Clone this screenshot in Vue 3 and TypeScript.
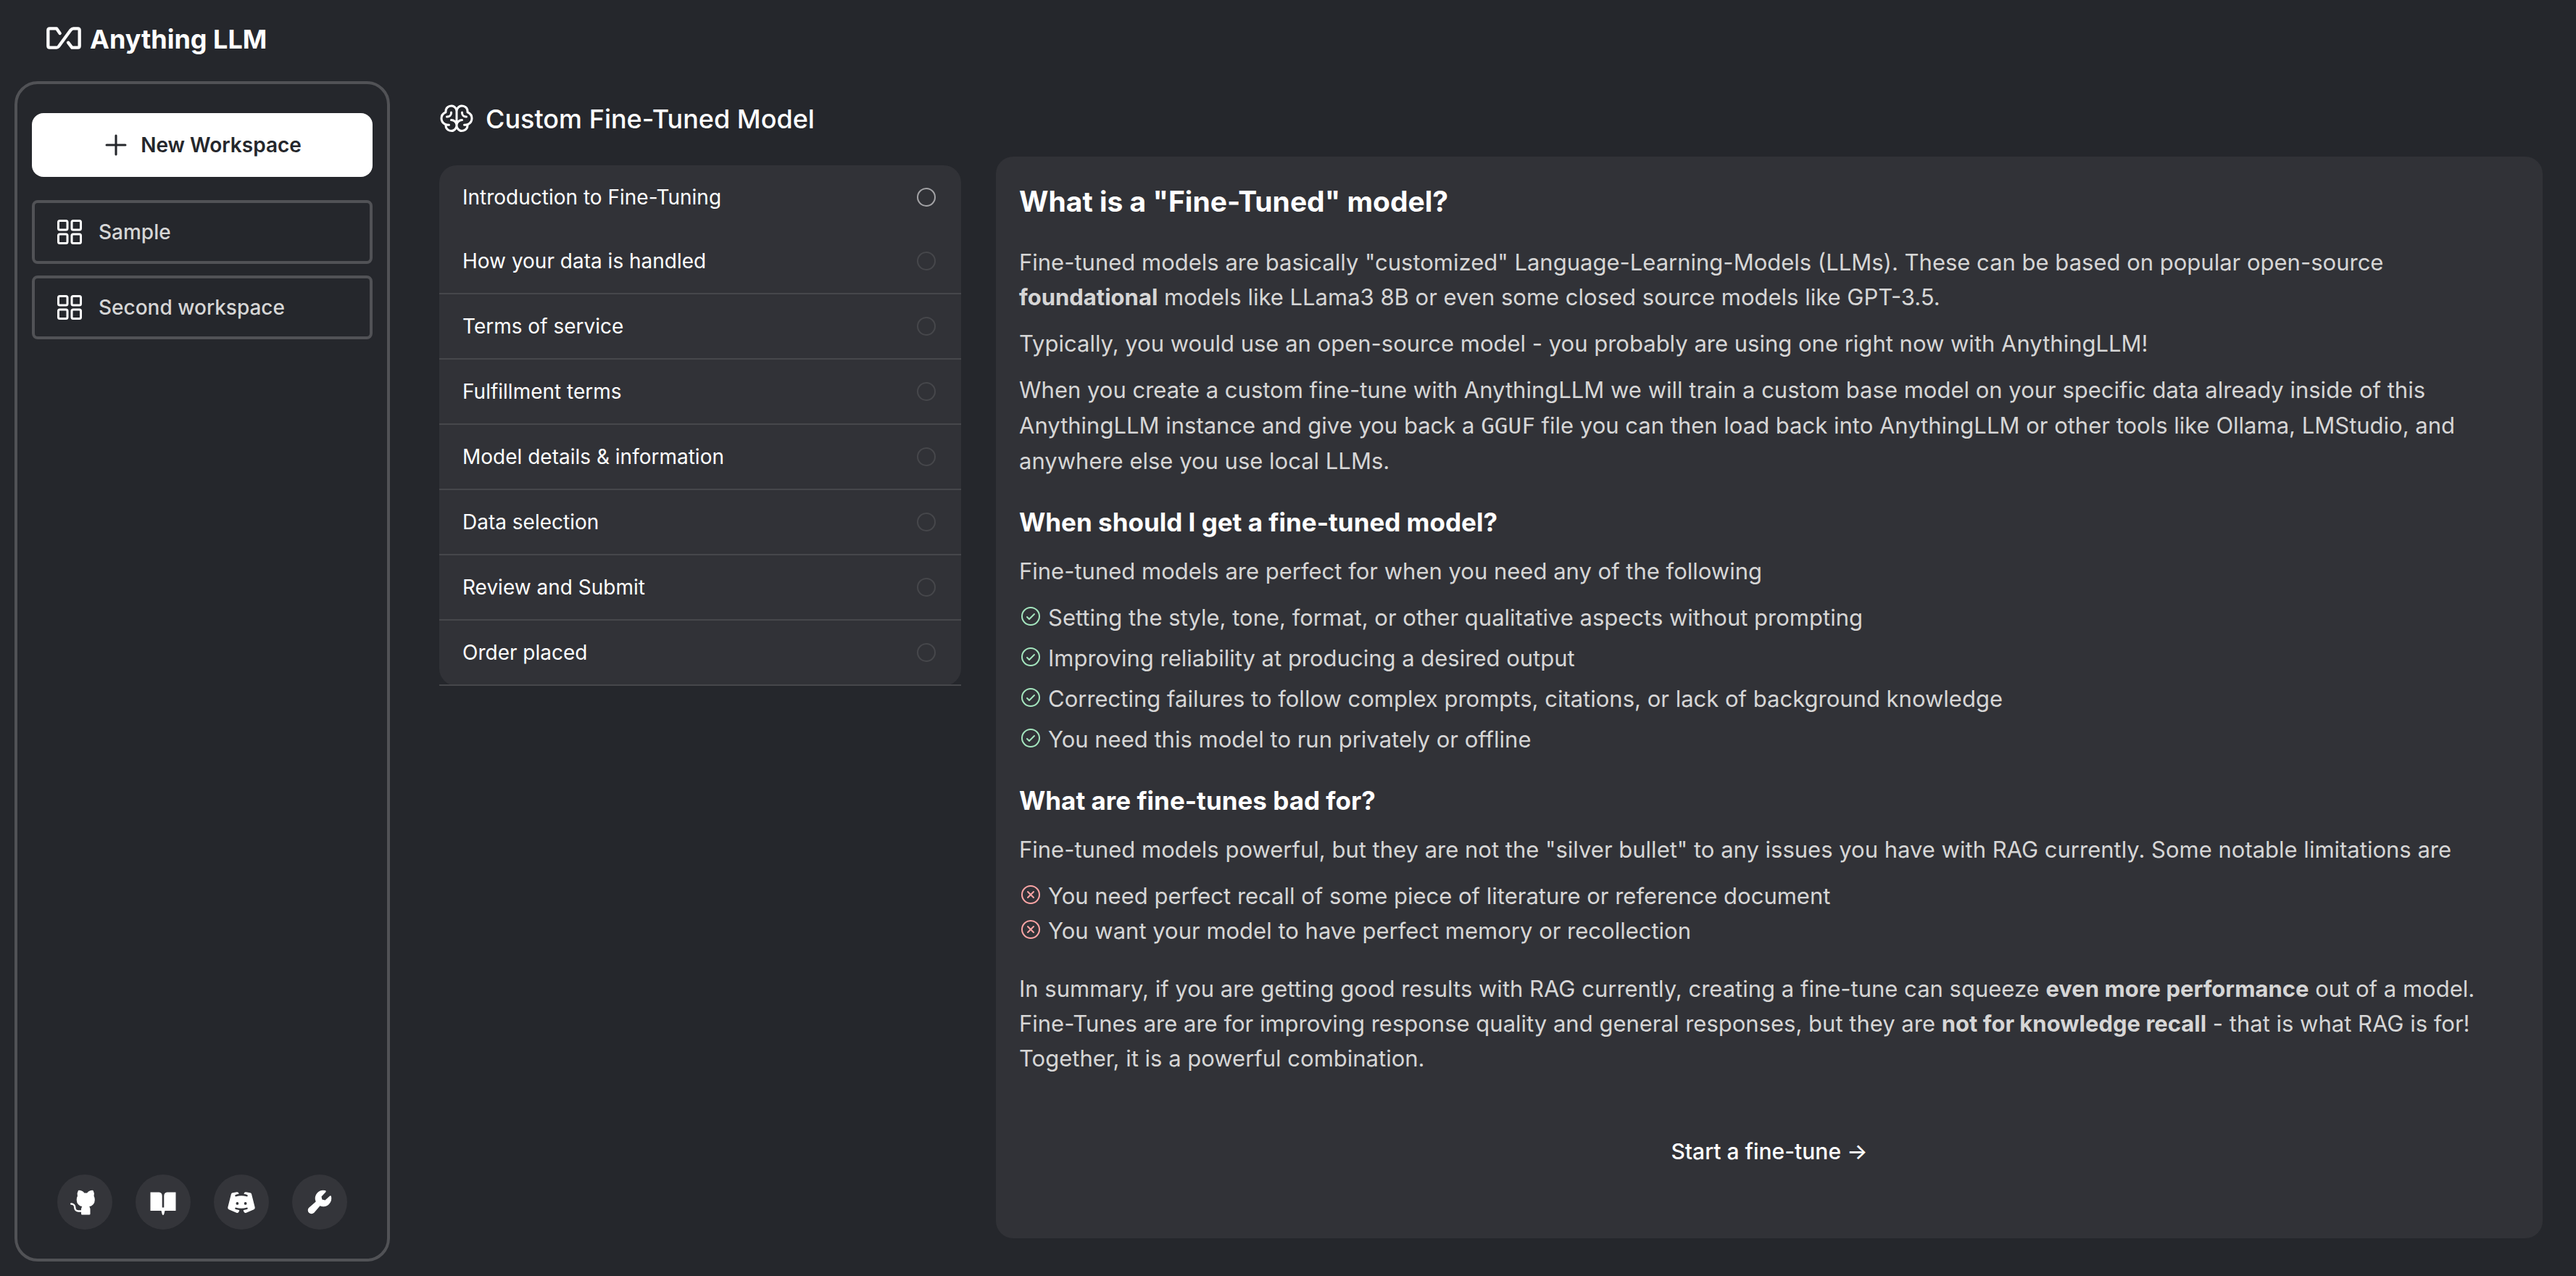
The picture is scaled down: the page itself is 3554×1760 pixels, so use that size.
<script setup lang="ts">
interface Step {
  label: string
  active: boolean
}

const workspaces: string[] = ['Sample', 'Second workspace']

const steps: Step[] = [
  { label: 'Introduction to Fine-Tuning', active: true },
  { label: 'How your data is handled', active: false },
  { label: 'Terms of service', active: false },
  { label: 'Fulfillment terms', active: false },
  { label: 'Model details & information', active: false },
  { label: 'Data selection', active: false },
  { label: 'Review and Submit', active: false },
  { label: 'Order placed', active: false },
]

const goodFor: string[] = [
  'Setting the style, tone, format, or other qualitative aspects without prompting',
  'Improving reliability at producing a desired output',
  'Correcting failures to follow complex prompts, citations, or lack of background knowledge',
  'You need this model to run privately or offline',
]

const badFor: string[] = [
  'You need perfect recall of some piece of literature or reference document',
  'You want your model to have perfect memory or recollection',
]
</script>

<template>
  <div class="app">
    <div class="side">
      <header class="brand">
        <svg class="brand-mark" viewBox="0 0 144 93" aria-hidden="true">
          <path
            d="M56 27 42 7H14Q7 7 7 14V79Q7 86 14 86H42Q47 86 51 81L101 13Q106 7 112 7H130Q137 7 137 14V79Q137 86 130 86H106L90 65"
          />
        </svg>
        <span>Anything LLM</span>
      </header>

      <aside class="sidebar">
        <button type="button" class="new-workspace">
          <svg class="icon-plus" viewBox="0 0 256 256" aria-hidden="true">
            <path d="M36 128H220M128 36V220" />
          </svg>
          <span>New Workspace</span>
        </button>

        <nav class="workspaces">
          <a v-for="name in workspaces" :key="name" href="#" class="workspace">
            <svg class="icon-grid" viewBox="0 0 40 40" aria-hidden="true">
              <rect x="4.5" y="4.5" width="12.5" height="12.5" rx="2" />
              <rect x="23" y="4.5" width="12.5" height="12.5" rx="2" />
              <rect x="4.5" y="23" width="12.5" height="12.5" rx="2" />
              <rect x="23" y="23" width="12.5" height="12.5" rx="2" />
            </svg>
            <span>{{ name }}</span>
          </a>
        </nav>

        <footer class="links">
          <a href="#" class="round" aria-label="GitHub">
            <svg viewBox="0 0 256 256">
              <path
                d="M216,104v8a56.06,56.06,0,0,1-48.44,55.47A39.8,39.8,0,0,1,176,192v40a8,8,0,0,1-8,8H104a8,8,0,0,1-8-8V216H72a40,40,0,0,1-40-40A24,24,0,0,0,8,152a8,8,0,0,1,0-16,40,40,0,0,1,40,40,24,24,0,0,0,24,24H96v-8a39.8,39.8,0,0,1,8.44-24.53A56.06,56.06,0,0,1,56,112v-8a58.14,58.14,0,0,1,7.69-28.32A59.78,59.78,0,0,1,69.07,28,8,8,0,0,1,76,24a59.75,59.75,0,0,1,48,24h24a59.75,59.75,0,0,1,48-24,8,8,0,0,1,6.93,4,59.74,59.74,0,0,1,5.37,47.68A58,58,0,0,1,216,104Z"
              />
            </svg>
          </a>
          <a href="#" class="round" aria-label="Documentation">
            <svg viewBox="0 0 40 40">
              <path
                d="M2.5 6.5H14.5Q18.7 7 18.7 11.5V27.5H21.3V11.5Q21.3 7 25.5 6.5H37.5V32H22.5L21.2 37Q20 39 18.8 37L17.5 32H2.5Z"
              />
            </svg>
          </a>
          <a href="#" class="round" aria-label="Discord">
            <svg viewBox="0 0 256 256">
              <path
                d="M247.51,174.39,218,58a16.08,16.08,0,0,0-13-11.88l-36.06-5.92a16.22,16.22,0,0,0-18.26,11.88l-.21.85a4,4,0,0,0,3.27,4.93,155.62,155.62,0,0,1,24.41,5.62,8.2,8.2,0,0,1,5.62,9.7,8,8,0,0,1-10.19,5.64,155.4,155.4,0,0,0-90.8-.1,8.22,8.22,0,0,1-10.28-4.81,8,8,0,0,1,5.08-10.33,156.85,156.85,0,0,1,24.72-5.72,4,4,0,0,0,3.27-4.93l-.21-.85A16.21,16.21,0,0,0,87.08,40.21L51,46.13A16.08,16.08,0,0,0,38,58L8.49,174.39a15.94,15.94,0,0,0,9.06,18.51l67,29.71a16.17,16.17,0,0,0,21.71-9.1l3.49-9.45a4,4,0,0,0-3.27-5.35,158.13,158.13,0,0,1-28.63-6.2,8.2,8.2,0,0,1-5.61-9.67,8,8,0,0,1,10.2-5.66,155.59,155.59,0,0,0,91.12,0,8,8,0,0,1,10.19,5.65,8.19,8.19,0,0,1-5.61,9.68,157.84,157.84,0,0,1-28.62,6.2,4,4,0,0,0-3.27,5.35l3.49,9.45a16.18,16.18,0,0,0,21.71,9.1l67-29.71A15.94,15.94,0,0,0,247.51,174.39ZM92,152a12,12,0,1,1,12-12A12,12,0,0,1,92,152Zm72,0a12,12,0,1,1,12-12A12,12,0,0,1,164,152Z"
              />
            </svg>
          </a>
          <a href="#" class="round" aria-label="Settings">
            <svg viewBox="0 0 256 256">
              <path
                d="M232,96a72,72,0,0,1-100.94,66L79,222.22c-.12.14-.26.29-.39.42a32,32,0,0,1-45.26-45.26c.14-.13.28-.27.43-.39L94,124.94a72.07,72.07,0,0,1,83.54-98.78,8,8,0,0,1,3.93,13.19L144,80l5.66,26.35L176,112l40.65-37.52a8,8,0,0,1,13.19,3.93A72.6,72.6,0,0,1,232,96Z"
              />
            </svg>
          </a>
        </footer>
      </aside>
    </div>

    <main class="main">
      <section class="progress">
        <h1 class="page-title">
          <svg class="icon-brain" viewBox="0 0 256 256" aria-hidden="true">
            <path
              d="M248,124a56.11,56.11,0,0,0-32-50.61V72a48,48,0,0,0-88-26.49A48,48,0,0,0,40,72v1.39a56,56,0,0,0,0,101.2V176a48,48,0,0,0,88,26.49A48,48,0,0,0,216,176v-1.41A56.09,56.09,0,0,0,248,124ZM88,208a32,32,0,0,1-31.81-28.56A55.87,55.87,0,0,0,64,180h8a8,8,0,0,0,0-16H64A40,40,0,0,1,50.67,86.27,8,8,0,0,0,56,78.73V72a32,32,0,0,1,64,0v68.26A47.8,47.8,0,0,0,88,128a8,8,0,0,0,0,16,32,32,0,0,1,0,64Zm104-44h-8a8,8,0,0,0,0,16h8a55.87,55.87,0,0,0,7.81-.56A32,32,0,1,1,168,144a8,8,0,0,0,0-16,47.8,47.8,0,0,0-32,12.26V72a32,32,0,0,1,64,0v6.73a8,8,0,0,0,5.33,7.54A40,40,0,0,1,192,164Zm16-52a8,8,0,0,1-8,8h-4a36,36,0,0,1-36-36V80a8,8,0,0,1,16,0v4a20,20,0,0,0,20,20h4A8,8,0,0,1,208,112ZM60,120H56a8,8,0,0,1,0-16h4A20,20,0,0,0,80,84V80a8,8,0,0,1,16,0v4A36,36,0,0,1,60,120Z"
            />
          </svg>
          <span>Custom Fine-Tuned Model</span>
        </h1>
        <ol class="steps">
          <li v-for="step in steps" :key="step.label" class="step" :class="{ active: step.active }">
            <span>{{ step.label }}</span>
            <span class="dot"></span>
          </li>
        </ol>
      </section>

      <article class="panel">
        <h2 class="panel-title">What is a "Fine-Tuned" model?</h2>
        <p>
          Fine-tuned models are basically "customized" Language-Learning-Models (LLMs). These can be based on popular
          open-source <strong>foundational</strong> models like LLama3 8B or even some closed source models like
          GPT-3.5.
        </p>
        <p>Typically, you would use an open-source model - you probably are using one right now with AnythingLLM!</p>
        <p>
          When you create a custom fine-tune with AnythingLLM we will train a custom base model on your specific data
          already inside of this AnythingLLM instance and give you back a <code>GGUF</code> file you can then load back
          into AnythingLLM or other tools like Ollama, LMStudio, and anywhere else you use local LLMs.
        </p>

        <h3>When should I get a fine-tuned model?</h3>
        <p>Fine-tuned models are perfect for when you need any of the following</p>
        <ul class="points good">
          <li v-for="text in goodFor" :key="text">
            <svg viewBox="0 0 256 256" aria-hidden="true">
              <circle cx="128" cy="128" r="96" />
              <path d="M88 136 112 160 168 104" />
            </svg>
            <span>{{ text }}</span>
          </li>
        </ul>

        <h3>What are fine-tunes bad for?</h3>
        <p>
          Fine-tuned models powerful, but they are not the "silver bullet" to any issues you have with RAG currently.
          Some notable limitations are
        </p>
        <ul class="points bad">
          <li v-for="text in badFor" :key="text">
            <svg viewBox="0 0 256 256" aria-hidden="true">
              <circle cx="128" cy="128" r="96" />
              <path d="M160 96 96 160M96 96 160 160" />
            </svg>
            <span>{{ text }}</span>
          </li>
        </ul>

        <p class="summary">
          In summary, if you are getting good results with RAG currently, creating a fine-tune can squeeze
          <strong>even more performance</strong> out of a model. Fine-Tunes are are for improving response quality and
          general responses, but they are <strong>not for knowledge recall</strong> - that is what RAG is for! Together,
          it is a powerful combination.
        </p>

        <button type="button" class="start">Start a fine-tune →</button>
      </article>
    </main>
  </div>
</template>

<style>
body {
  background: #25272c;
}
</style>

<style scoped>
.app {
  box-sizing: border-box;
  display: flex;
  min-height: 100vh;
  padding: 0 46px 20px 20px;
  background: #25272c;
  color: #fff;
  font-family: Inter, 'Open Sans', sans-serif;
}

.side {
  flex: 0 0 518px;
  display: flex;
  flex-direction: column;
}

.brand {
  display: flex;
  align-items: center;
  gap: 12px;
  height: 108px;
  margin-bottom: 4px;
  padding-left: 44px;
  font-size: 36px;
  font-weight: 700;
}

.brand-mark {
  width: 48px;
  height: 31px;
  margin-bottom: 4px;
  fill: none;
  stroke: #fff;
  stroke-width: 13;
  stroke-linecap: round;
  stroke-linejoin: round;
}

.sidebar {
  flex: 1;
  display: flex;
  flex-direction: column;
  padding: 40px 20px;
  border: 4px solid #515256;
  border-radius: 32px;
}

.new-workspace {
  display: flex;
  align-items: center;
  justify-content: center;
  gap: 16px;
  height: 88px;
  padding: 0;
  border: 0;
  border-radius: 16px;
  background: #fff;
  color: #25272c;
  font-family: inherit;
  font-size: 28px;
  font-weight: 600;
}

.icon-plus {
  width: 36px;
  height: 36px;
  fill: none;
  stroke: currentColor;
  stroke-width: 22;
  stroke-linecap: round;
}

.workspaces {
  display: flex;
  flex-direction: column;
  gap: 16px;
  margin-top: 32px;
}

.workspace {
  box-sizing: border-box;
  display: flex;
  align-items: center;
  gap: 20px;
  height: 88px;
  padding: 0 28px;
  border: 4px solid #515256;
  border-radius: 8px;
  color: #d6d6d6;
  font-size: 28px;
  font-weight: 500;
  text-decoration: none;
}

.icon-grid {
  width: 40px;
  height: 40px;
  fill: none;
  stroke: #fff;
  stroke-width: 3;
}

.links {
  display: flex;
  justify-content: center;
  gap: 32px;
  margin-top: auto;
}

.round {
  display: flex;
  align-items: center;
  justify-content: center;
  width: 76px;
  height: 76px;
  border-radius: 50%;
  background: #34353a;
}

.round svg {
  width: 40px;
  height: 40px;
  fill: #fff;
}

.main {
  flex: 1;
  display: flex;
  align-items: flex-start;
  gap: 48px;
  padding-left: 68px;
}

.progress {
  flex: 0 0 720px;
  margin-top: 136px;
}

.page-title {
  display: flex;
  align-items: center;
  gap: 16px;
  margin: 0 0 36px;
  font-size: 36px;
  font-weight: 500;
  line-height: 56px;
}

.icon-brain {
  width: 48px;
  height: 48px;
  fill: #fff;
}

.steps {
  margin: 0;
  padding: 0;
  list-style: none;
  border-radius: 24px;
  background: #313237;
}

.step {
  display: flex;
  align-items: center;
  justify-content: space-between;
  height: 88px;
  padding: 0 35px 0 32px;
  border-bottom: 2px solid #46474b;
  font-size: 28px;
}

.step.active {
  border-bottom: 0;
}

.dot {
  box-sizing: border-box;
  width: 26px;
  height: 26px;
  border: 2px solid #46474b;
  border-radius: 50%;
}

.active .dot {
  border-color: #a3a3a6;
}

.panel {
  flex: 1;
  min-width: 0;
  margin-top: 216px;
  padding: 32px 32px 48px;
  border-radius: 24px;
  background: #313237;
  color: #d6d6d6;
  font-size: 31px;
  line-height: 48px;
}

.panel-title {
  margin: 0 0 30px;
  color: #fff;
  font-size: 39px;
  font-weight: 700;
  line-height: 60px;
}

.panel h3 {
  margin: 32px 0 16px;
  color: #fff;
  font-size: 35px;
  font-weight: 700;
  line-height: 56px;
}

.panel p {
  margin: 0 0 16px;
}

.panel code {
  font-family: 'DejaVu Sans Mono', monospace;
  font-size: 31px;
  line-height: 50px;
}

.points {
  display: flex;
  flex-direction: column;
  margin: 0;
  padding: 0;
  list-style: none;
}

.points li {
  display: flex;
  align-items: center;
  gap: 8px;
}

.points svg {
  flex: none;
  width: 32px;
  height: 32px;
  margin-bottom: 4px;
  fill: none;
  stroke-width: 16;
  stroke-linecap: round;
  stroke-linejoin: round;
}

.good {
  gap: 8px;
}

.good svg {
  stroke: #a4e5be;
}

.bad svg {
  stroke: #fca5a5;
}

.panel .summary {
  margin: 32px 0;
}

.start {
  display: block;
  margin: 0 auto;
  padding: 48px 16px;
  border: 0;
  background: transparent;
  color: #fff;
  font-family: inherit;
  font-size: 30px;
  font-weight: 500;
  line-height: 48px;
}
</style>
